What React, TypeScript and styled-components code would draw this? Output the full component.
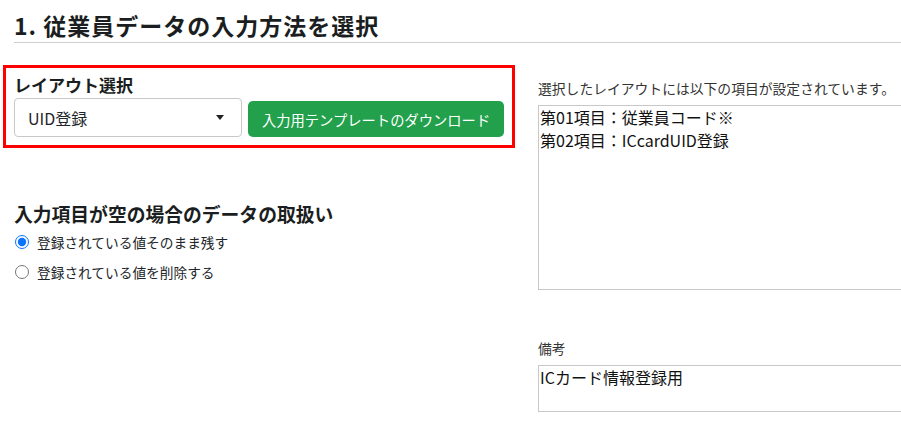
import React from "react";
import styled, { createGlobalStyle } from "styled-components";

const GlobalStyle = createGlobalStyle`
  html, body {
    margin:0;
    padding:0;
    background:#fff;
    overflow:hidden;
  }
  body {
    font-family:"Noto Sans CJK JP", "Noto Sans", sans-serif;
    color:#212529;
  }
`;

const Page = styled.div`
  width:901px;
  height:425px;
  overflow:hidden;
`;

const Title = styled.h1`
  margin:0 0 0 14px;
  padding:10px 0 2px;
  font-size:23px;
  letter-spacing:1px;
  line-height:30px;
  font-weight:700;
  color:#1b1e21;
  border-bottom:1px solid #cfcfcf;
`;

const Columns = styled.div`
  display:flex;
  align-items:flex-start;
`;

const LeftColumn = styled.div`
  width:512px;
  margin:22px 0 0 3px;
  flex-shrink:0;
`;

const HighlightBox = styled.div`
  border:3px solid #f00;
  padding:4px 8px 8px;
`;

const SectionLabel = styled.div<{ $size: number }>`
  font-size:${(p) => p.$size}px;
  line-height:26px;
  font-weight:700;
  color:#1b1e21;
`;

const PickerRow = styled.div`
  display:flex;
  align-items:flex-end;
  gap:6px;
`;

const SelectBox = styled.div`
  width:229px;
  height:39px;
  box-sizing:border-box;
  border:1px solid #c8c8c8;
  border-radius:4px;
  display:flex;
  align-items:center;
  justify-content:space-between;
  padding:0 17px 0 13px;
  font-size:16px;
  color:#212529;
`;

const Caret = styled.span`
  width:0;
  height:0;
  border-left:4.5px solid transparent;
  border-right:4.5px solid transparent;
  border-top:5px solid #222;
`;

const DownloadButton = styled.button`
  width:257px;
  height:36px;
  border:none;
  border-radius:5px;
  background:#22a04b;
  color:#fff;
  font-family:inherit;
  font-size:14.3px;
  padding:0;
  cursor:pointer;
`;

const EmptySection = styled.div`
  margin:53px 0 0 11px;
`;

const RadioRow = styled.label`
  display:flex;
  align-items:center;
  height:30px;
  font-size:13.7px;
  color:#212529;
`;

const Radio = styled.input`
  width:14px;
  height:14px;
  margin:0 8px 0 1px;
  accent-color:#0a75ff;
`;

const RightColumn = styled.div`
  margin:35px 0 0 23px;
  width:400px;
  flex-shrink:0;
`;

const FieldLabel = styled.div<{ $top?: number }>`
  font-size:13.8px;
  line-height:20px;
  color:#333;
  margin-top:${(p) => p.$top ?? 0}px;
  margin-bottom:7px;
`;

const InfoArea = styled.textarea<{ $height: number }>`
  display:block;
  width:100%;
  height:${(p) => p.$height}px;
  box-sizing:border-box;
  border:1px solid #c8c8c8;
  padding:0 1px;
  margin:0;
  resize:none;
  font-family:inherit;
  font-size:16px;
  line-height:23px;
  color:#111;
  outline:none;
`;

function App() {
  return (
    <Page>
      <GlobalStyle />
      <Title>1. 従業員データの入力方法を選択</Title>
      <Columns>
        <LeftColumn>
          <HighlightBox>
            <SectionLabel $size={17}>レイアウト選択</SectionLabel>
            <PickerRow>
              <SelectBox>
                UID登録
                <Caret />
              </SelectBox>
              <DownloadButton>入力用テンプレートのダウンロード</DownloadButton>
            </PickerRow>
          </HighlightBox>

          <EmptySection>
            <SectionLabel $size={18.8}>入力項目が空の場合のデータの取扱い</SectionLabel>
            <RadioRow>
              <Radio type="radio" name="empty" defaultChecked />
              登録されている値そのまま残す
            </RadioRow>
            <RadioRow>
              <Radio type="radio" name="empty" />
              登録されている値を削除する
            </RadioRow>
          </EmptySection>
        </LeftColumn>

        <RightColumn>
          <FieldLabel>選択したレイアウトには以下の項目が設定されています。</FieldLabel>
          <InfoArea
            $height={185}
            readOnly
            value={"第01項目：従業員コード※\n第02項目：ICcardUID登録"}
          />
          <FieldLabel $top={48}>備考</FieldLabel>
          <InfoArea $height={47} readOnly value="ICカード情報登録用" />
        </RightColumn>
      </Columns>
    </Page>
  );
}

export default App;
